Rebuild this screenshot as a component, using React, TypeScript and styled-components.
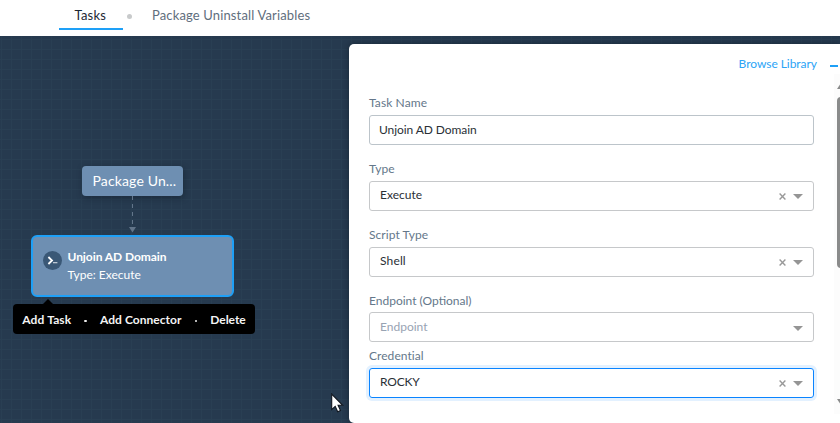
import React from "react";
import styled, { createGlobalStyle, css } from "styled-components";

const GlobalStyle = createGlobalStyle`
  * { box-sizing: border-box; }
  body { margin: 0; background: #fff; font-family: Lato, "Liberation Sans", sans-serif; font-size: 12px; }
`;

const Page = styled.div`
  width: 840px;
  height: 423px;
  display: flex;
  flex-direction: column;
  overflow: hidden;
  position: relative;
`;

const TabBar = styled.nav`
  height: 36px;
  flex: none;
  display: flex;
  align-items: flex-start;
  padding-left: 59px;
  background: #fff;
`;

const Tab = styled.div<{ $active?: boolean }>`
  height: 30px;
  line-height: 30px;
  font-size: 13px;
  white-space: nowrap;
  letter-spacing: ${(p) => (p.$active ? "0.2px" : "0.14px")};
  color: ${(p) => (p.$active ? "#1d2733" : "#5f6e7d")};
  ${(p) =>
    p.$active &&
    css`
      width: 64px;
      padding-left: 15.5px;
      box-shadow: inset 0 -2px #1ea0f7;
    `}
`;

const TabDot = styled.span`
  width: 5px;
  height: 5px;
  margin: 14px 20px 0 4px;
  border-radius: 50%;
  background: #c8cacb;
`;

const Workspace = styled.main`
  flex: 1;
  position: relative;
  display: flex;
  justify-content: flex-end;
  padding-top: 8px;
  background-color: #263a4f;
  background-image: linear-gradient(to right, #293f53 1px, transparent 1px),
    linear-gradient(to bottom, #293f53 1px, transparent 1px);
  background-size: 10px 10px;
  background-position: 1px 3px;
`;

const RootNode = styled.div`
  position: absolute;
  left: 82px;
  top: 130px;
  width: 101px;
  height: 30px;
  padding-left: 10.5px;
  line-height: 30px;
  font-size: 14px;
  letter-spacing: 0.14px;
  white-space: nowrap;
  color: #fff;
  background: #6e8fb2;
  border-radius: 4px;
  box-shadow: 1px 2px 6px rgba(10, 20, 30, 0.35);
`;

const Connector = styled.svg`
  position: absolute;
  left: 127px;
  top: 160px;
`;

const TaskNode = styled.div`
  position: absolute;
  left: 31px;
  top: 199px;
  width: 203px;
  height: 62px;
  display: flex;
  padding: 11px 0 0 10px;
  color: #fff;
  background: #6e8fb2;
  border: 2px solid #1ea0f7;
  border-radius: 6px;
`;

const TaskIcon = styled.svg`
  margin: 3px 5.5px 0 0;
`;

const TaskText = styled.div`
  display: flex;
  flex-direction: column;
  line-height: 18px;
  white-space: nowrap;
`;

const TaskTitle = styled.strong`
  font-weight: 700;
  letter-spacing: -0.06px;
`;

const ActionMenu = styled.div`
  position: absolute;
  left: 13px;
  top: 268px;
  width: 242px;
  height: 30px;
  display: flex;
  align-items: center;
  padding: 2px 0 0 9.3px;
  white-space: nowrap;
  font-weight: 700;
  color: #f4f4f4;
  background: #000;
  border-radius: 4px;

  &::before {
    content: "";
    position: absolute;
    left: 30px;
    top: -5px;
    border: 5px solid transparent;
    border-top: 0;
    border-bottom-color: #000;
  }
`;

const Action = styled.span<{ $spacing?: number }>`
  line-height: 16px;
  letter-spacing: ${(p) => p.$spacing ?? 0}px;
`;

const ActionDot = styled.i`
  width: 2.5px;
  height: 2.5px;
  margin: 2px 13px 0 13.2px;
  border-radius: 50%;
  background: #eee;
`;

const Panel = styled.section`
  width: 491px;
  height: 379px;
  display: flex;
  position: relative;
  padding-left: 20px;
  background: #fff;
  border-radius: 5px 0 0 5px;
  box-shadow: 0 0 6px rgba(10, 20, 30, 0.5);
`;

const PanelBody = styled.div`
  width: 445px;
  display: flex;
  flex-direction: column;
`;

const PanelSide = styled.div`
  flex: 1;
  margin-left: 16px;
  display: flex;
  flex-direction: column;
  padding-top: 21px;
`;

const PanelHeader = styled.header`
  height: 48px;
  display: flex;
  justify-content: flex-end;
  padding-top: 10px;
  margin-right: -3px;
`;

const LibraryLink = styled.a`
  line-height: 20px;
  letter-spacing: -0.04px;
  color: #2ba4f6;
`;

const Collapse = styled.div`
  width: 8px;
  height: 2px;
  margin-bottom: 7px;
  background: #1ea0f7;
`;

const ScrollTrack = styled.div`
  width: 6px;
  height: 340px;
  margin-left: 4px;
  padding: 9px 0 9px 3px;
  display: flex;
  flex-direction: column;
  overflow: hidden;
  background: #fcfcfc;
`;

const ScrollThumb = styled.div`
  width: 8px;
  height: 171px;
  margin: 8px 0 auto;
  border-radius: 4px;
  background: #8a8b8b;
`;

const ScrollArrow = styled.svg`
  flex: none;
`;

const Field = styled.div<{ $height: number }>`
  height: ${(p) => p.$height}px;
  flex: none;
  display: flex;
  flex-direction: column;
  justify-content: flex-end;
`;

const Label = styled.label<{ $gap: number; $spacing?: number }>`
  line-height: 16px;
  margin-bottom: ${(p) => p.$gap}px;
  letter-spacing: ${(p) => p.$spacing ?? 0}px;
  color: #64778a;
`;

const Control = styled.div<{ $focused?: boolean; $select?: boolean }>`
  height: 30px;
  display: flex;
  align-items: center;
  padding: 0 10px 0 ${(p) => (p.$select ? 10 : 9)}px;
  border: 1px solid ${(p) => (p.$focused ? "#0a84ff" : p.$select ? "#c6c8ca" : "#bcc4ca")};
  border-radius: 3px;
  ${(p) => p.$focused && "box-shadow: 0 0 0 3px #e3f1ff;"}
`;

const Value = styled.span<{ $placeholder?: boolean; $spacing?: number; $raised?: boolean }>`
  flex: 1;
  line-height: 16px;
  margin-bottom: ${(p) => (p.$raised ? 2 : 0)}px;
  letter-spacing: ${(p) => p.$spacing ?? 0}px;
  color: ${(p) => (p.$placeholder ? "#98a3b3" : "#2a2f36")};
`;

const ClearIcon = styled.svg`
  margin-right: 7px;
`;

const Caret = styled.svg<{ $lowered: boolean }>`
  margin-top: ${(p) => (p.$lowered ? 2 : 0)}px;
`;

type SelectProps = { value?: string; placeholder?: string; focused?: boolean; spacing?: number };

function Select({ value, placeholder, focused, spacing }: SelectProps) {
  return (
    <Control $select $focused={focused}>
      <Value $placeholder={!value} $spacing={spacing} $raised={!!value}>
        {value ?? placeholder}
      </Value>
      {value && (
        <ClearIcon width="7" height="7" viewBox="0 0 7 7">
          <path d="M.6.6 6.4 6.4M6.4.6.6 6.4" stroke="#999" strokeWidth="1.4" />
        </ClearIcon>
      )}
      <Caret $lowered={!value} width="10" height="5" viewBox="0 0 10 5">
        <path d="M0 0h10L5 5z" fill="#959595" />
      </Caret>
    </Control>
  );
}

const Pointer = styled.svg`
  position: absolute;
  left: 331px;
  top: 393px;
`;

export default function App() {
  return (
    <Page>
      <GlobalStyle />
      <TabBar>
        <Tab $active>Tasks</Tab>
        <TabDot />
        <Tab>Package Uninstall Variables</Tab>
      </TabBar>
      <Workspace>
        <RootNode>Package Un...</RootNode>
        <Connector width="11" height="38" viewBox="0 0 11 38">
          <path d="M5.5 0v31" stroke="#62758a" strokeDasharray="4 4" />
          <path d="M2 31h7l-3.5 5.5z" fill="#62758a" />
        </Connector>
        <TaskNode>
          <TaskIcon width="19" height="19" viewBox="0 0 19 19">
            <circle cx="9.5" cy="9.5" r="9.5" fill="#3a5876" />
            <path d="M5.4 6 9 9.5 5.4 13" fill="none" stroke="#fff" strokeWidth="1.8" />
            <path d="M10 11.7h4.4" stroke="#d5dde6" strokeWidth="1.1" />
          </TaskIcon>
          <TaskText>
            <TaskTitle>Unjoin AD Domain</TaskTitle>
            <span>Type: Execute</span>
          </TaskText>
        </TaskNode>
        <ActionMenu>
          <Action $spacing={0.12}>Add Task</Action>
          <ActionDot />
          <Action $spacing={0.04}>Add Connector</Action>
          <ActionDot />
          <Action>Delete</Action>
        </ActionMenu>
        <Panel>
          <PanelBody>
            <PanelHeader>
              <LibraryLink>Browse Library</LibraryLink>
            </PanelHeader>
            <Field $height={53}>
              <Label $gap={4} $spacing={0.1}>Task Name</Label>
              <Control>
                <Value $spacing={-0.08}>Unjoin AD Domain</Value>
              </Control>
            </Field>
            <Field $height={66}>
              <Label $gap={4} $spacing={0.1}>Type</Label>
              <Select value="Execute" />
            </Field>
            <Field $height={66}>
              <Label $gap={4} $spacing={0.07}>Script Type</Label>
              <Select value="Shell" spacing={0.15} />
            </Field>
            <Field $height={65}>
              <Label $gap={3}>Endpoint (Optional)</Label>
              <Select placeholder="Endpoint" />
            </Field>
            <Field $height={56}>
              <Label $gap={4} $spacing={0.06}>Credential</Label>
              <Select value="ROCKY" focused spacing={-0.2} />
            </Field>
          </PanelBody>
          <PanelSide>
            <Collapse />
            <ScrollTrack>
              <ScrollArrow width="8" height="6" viewBox="0 0 8 6">
                <path d="M0 6 4 0l4 6z" fill="#8a8b8b" />
              </ScrollArrow>
              <ScrollThumb />
              <ScrollArrow width="8" height="6" viewBox="0 0 8 6">
                <path d="M0 0h8L4 6z" fill="#8a8b8b" />
              </ScrollArrow>
            </ScrollTrack>
          </PanelSide>
        </Panel>
      </Workspace>
      <Pointer width="13" height="20" viewBox="0 0 13 20">
        <path
          d="M.7 1v15.6l3.5-3.3 2.5 5.4 2.8-1.2-2.4-5.2h4.6z"
          fill="#fff"
          stroke="#10161f"
          strokeWidth="1.1"
        />
      </Pointer>
    </Page>
  );
}
